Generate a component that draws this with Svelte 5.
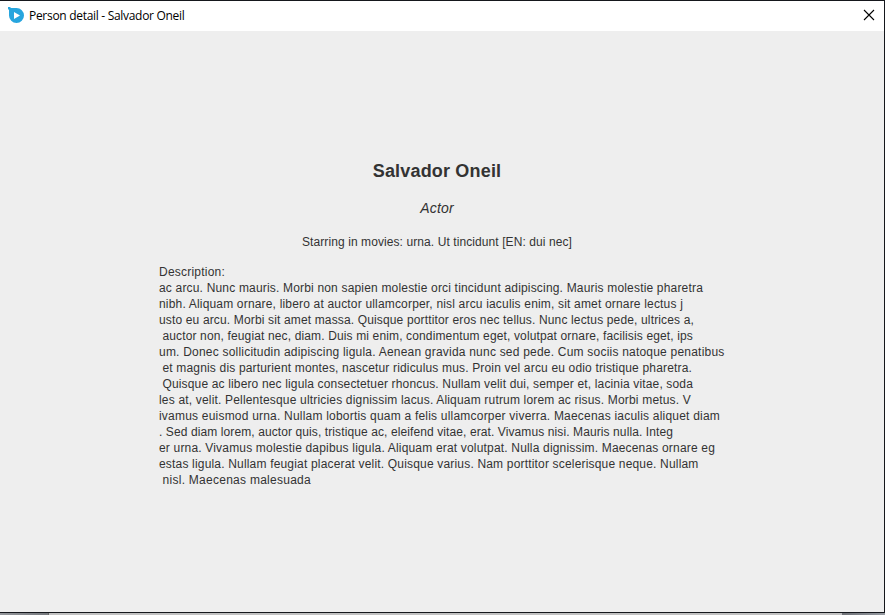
<script>
  const title = 'Person detail - Salvador Oneil';
  const description = [
    ['Description:', 66],
    ['ac arcu. Nunc mauris. Morbi non sapien molestie orci tincidunt adipiscing. Mauris molestie pharetra', 544],
    ['nibh. Aliquam ornare, libero at auctor ullamcorper, nisl arcu iaculis enim, sit amet ornare lectus j', 524],
    ['usto eu arcu. Morbi sit amet massa. Quisque porttitor eros nec tellus. Nunc lectus pede, ultrices a,', 535],
    [' auctor non, feugiat nec, diam. Duis mi enim, condimentum eget, volutpat ornare, facilisis eget, ips', 534],
    ['um. Donec sollicitudin adipiscing ligula. Aenean gravida nunc sed pede. Cum sociis natoque penatibus', 565.5],
    [' et magnis dis parturient montes, nascetur ridiculus mus. Proin vel arcu eu odio tristique pharetra.', 533],
    [' Quisque ac libero nec ligula consectetuer rhoncus. Nullam velit dui, semper et, lacinia vitae, soda', 534],
    ['les at, velit. Pellentesque ultricies dignissim lacus. Aliquam rutrum lorem ac risus. Morbi metus. V', 532],
    ['ivamus euismod urna. Nullam lobortis quam a felis ullamcorper viverra. Maecenas iaculis aliquet diam', 561],
    ['. Sed diam lorem, auctor quis, tristique ac, eleifend vitae, erat. Vivamus nisi. Mauris nulla. Integ', 514],
    ['er urna. Vivamus molestie dapibus ligula. Aliquam erat volutpat. Nulla dignissim. Maecenas ornare eg', 556],
    ['estas ligula. Nullam feugiat placerat velit. Quisque varius. Nam porttitor scelerisque neque. Nullam', 539.5],
    [' nisl. Maecenas malesuada', 152]
  ];

  // Spreads the letters of a line so that it takes up the given width.
  function fit(node, width) {
    const natural = node.getBoundingClientRect().width;
    node.style.letterSpacing = `${(width - natural) / node.textContent.length}px`;
  }
</script>

<div class="window">
  <header>
    <svg class="logo" width="16" height="16" viewBox="0 0 16 16" aria-hidden="true">
      <path d="M0 0h2l1 1h5.5A7.5 7.5 0 1 1 1 8.5V3L0 2Z" fill="#27a5de" />
      <path d="M6 5v7l6-3.5Z" fill="#fff" />
    </svg>
    <span class="title"><span use:fit={155.5}>{title}</span></span>
    <svg class="close" width="12" height="12" viewBox="0 0 12 12" aria-label="Close">
      <path d="M1 1l10 10M11 1L1 11" stroke="#000" stroke-width="1.1" />
    </svg>
  </header>
  <main>
    <h1><span use:fit={128.5}>Salvador Oneil</span></h1>
    <p class="role"><span use:fit={33.5}>Actor</span></p>
    <p class="movies"><span use:fit={270}>Starring in movies: urna. Ut tincidunt [EN: dui nec]</span></p>
    <div class="description">
      {#each description as [text, width]}
        <div><span use:fit={width}>{text}</span></div>
      {/each}
    </div>
  </main>
</div>
<div class="behind"><i></i><b></b><i class="right"></i></div>

<style>
  :global(body) { background: #eee; overflow: hidden; }
  .window {
    box-sizing: border-box;
    width: 885px;
    height: 613px;
    border: solid #15171c;
    border-width: 1px 1px 1px 0;
    background: #eee;
    font-family: "Liberation Sans", Arial, sans-serif;
    color: #333;
  }
  header {
    box-sizing: border-box;
    height: 30px;
    padding: 0 9px 0 8px;
    display: flex;
    align-items: center;
    background: #fff;
    color: #000;
  }
  .logo { margin: -2px 5px 0 0; }
  .title { flex: 1; font: 12px/16px "Open Sans", "Noto Sans", sans-serif; }
  .close { margin-top: -2px; }
  main { padding-top: 128px; font-size: 12px; }
  span { white-space: pre; }
  h1, p { margin: 0; width: 874px; text-align: center; }
  h1 { font-size: 18px; line-height: 24px; font-weight: bold; }
  .role { margin-top: 16px; font-size: 14px; line-height: 18px; font-style: italic; }
  .movies { margin-top: 17px; line-height: 16px; }
  .description { margin: 14px 0 0 159px; line-height: 16px; }
  .behind { display: flex; width: 885px; height: 2px; }
  .behind i { width: 48px; background: linear-gradient(90deg, #94979b, #777a7f); border-right: 1px solid #666; }
  .behind b { flex: 1; background: #c1c1c1; }
  .behind i.right { width: 43px; border: 0; background: linear-gradient(90deg, #6f7277, #969ba2); }
</style>
